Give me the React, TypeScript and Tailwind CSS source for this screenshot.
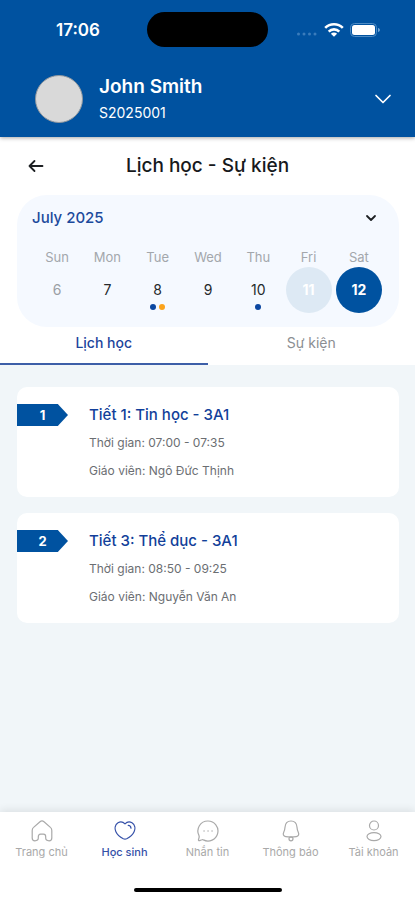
import { useState } from "react";
import type { ReactNode } from "react";
import clsx from "clsx";

const days = [
  { name: "Sun", date: 6, look: "text-[#9a9fa5]", dots: [] },
  { name: "Mon", date: 7, look: "text-[#26292c]", dots: [] },
  { name: "Tue", date: 8, look: "text-[#26292c]", dots: ["bg-[#0b47a1]", "bg-[#fba31c]"] },
  { name: "Wed", date: 9, look: "text-[#26292c]", dots: [] },
  { name: "Thu", date: 10, look: "text-[#26292c]", dots: ["bg-[#0b47a1]"] },
  { name: "Fri", date: 11, look: "bg-[#dde9f4] text-white font-bold", dots: [] },
  { name: "Sat", date: 12, look: "bg-[#0052a0] text-white font-bold", dots: [] },
];

const lessons = [
  { id: 1, title: "Tiết 1: Tin học - 3A1", time: "07:00 - 07:35", teacher: "Ngô Đức Thịnh" },
  { id: 2, title: "Tiết 3: Thể dục - 3A1", time: "08:50 - 09:25", teacher: "Nguyễn Văn An" },
];

const tabs = ["Lịch học", "Sự kiện"];

const navItems: { label: string; icon: ReactNode }[] = [
  {
    label: "Trang chủ",
    icon: (
      <path d="M1.200 10.400c0-1.300.4-2.200 1.400-3L9 1.800c1.300-1.100 2.700-1.100 4 0l6.400 5.600c1 .8 1.400 1.700 1.400 3v7.600c0 1.800-.9 2.800-2.700 2.800s-3.400-.9-3.400-2.700v-1.400c0-1.700-.8-2.500-2.200-2.500h-3c-1.400 0-2.200.8-2.200 2.500v1.400c0 1.800-1.600 2.700-3.400 2.700S1.200 19.800 1.200 18z" />
    ),
  },
  {
    label: "Học sinh",
    icon: (
      <>
        <path d="M11 3.800C9.300 2 6.300 1.300 4 2.700 1.100 4.500.4 8.300 1.900 11.700c1.500 3.300 4.600 5.600 7.400 7.100 1.200.6 2.200.6 3.400 0 2.800-1.500 5.900-3.800 7.400-7.100 1.500-3.400.8-7.200-2.100-9C15.700 1.300 12.700 2 11 3.800z" />
        <path d="M14.200 5.400c1.700.1 2.700 1.100 2.800 2.800" />
      </>
    ),
  },
  {
    label: "Nhắn tin",
    icon: (
      <>
        <path d="M11 1a10 10 0 1 1-4.600 18.900c-.5-.3-1-.3-1.500-.1l-2.300.8c-.8.3-1.300-.2-1.100-1l.7-2.600c.1-.5 0-.9-.2-1.400A10 10 0 0 1 11 1z" />
        <path d="M7 11h.1M11 11h.1M15 11h.1" strokeWidth="1.300" />
      </>
    ),
  },
  {
    label: "Thông báo",
    icon: (
      <>
        <path d="M11 1C7.300 1 5.200 3.700 5 7.300c-.1 2-.4 3-1.200 4.600-1.200 2.500-.4 4.300 1.900 4.700 3.500.6 7.100.6 10.600 0 2.300-.4 3.100-2.200 1.900-4.700-.8-1.600-1.100-2.600-1.200-4.600C16.800 3.700 14.700 1 11 1z" />
        <circle cx="11" cy="18.800" r="2" />
      </>
    ),
  },
  {
    label: "Tài khoản",
    icon: (
      <>
        <circle cx="11" cy="5.500" r="4.500" />
        <ellipse cx="11" cy="16.600" rx="7" ry="4" />
      </>
    ),
  },
];

function StatusBar() {
  return (
    <div className="grid grid-cols-3 items-center px-[17px] pt-3">
      <span className="pl-[39px] text-[17px] leading-6 font-semibold">17:06</span>
      <div className="h-[35px] w-[121px] justify-self-center rounded-full bg-black" />
      <div className="flex items-center justify-end pr-[17px]">
        <svg width="22" height="18" viewBox="0 0 22 18" className="mr-[6px] fill-[#3a7cbb]">
          <circle cx="2.500" cy="13" r="1.500" />
          <circle cx="8" cy="13" r="1.500" />
          <circle cx="13.500" cy="13" r="1.500" />
          <circle cx="19" cy="13" r="1.500" />
        </svg>
        <svg width="20" height="16" viewBox="0 0 20 16" fill="none" stroke="white" strokeWidth="2.600" className="mr-[6px]">
          <path d="M1.200 5.900a12.500 12.500 0 0 1 17.600 0" />
          <path d="M4.700 9.600a7.500 7.500 0 0 1 10.600 0" />
          <path d="M10 14.800l-3.100-3.100a4.400 4.400 0 0 1 6.200 0z" fill="white" stroke="none" />
        </svg>
        <svg width="31" height="14" viewBox="0 0 31 14">
          <rect x=".500" y=".500" width="26" height="13" rx="4" fill="none" stroke="#4d8bc4" />
          <rect x="2" y="2" width="23" height="10" rx="2.500" fill="white" />
          <path d="M28 5v4c1.200-.4 1.900-1.100 1.900-2S29.200 5.400 28 5z" fill="#6fa3d3" />
        </svg>
      </div>
    </div>
  );
}

function Header() {
  return (
    <header className="relative bg-[#0052a0] text-white shadow-[0_1px_4px_rgba(0,0,0,0.35)]">
      <StatusBar />
      <div className="flex items-center gap-4 pt-[26px] pr-[22px] pb-3 pl-[35px]">
        <div className="size-12 rounded-full border border-[#8f979f] bg-[#d9d9d9]" />
        <div className="flex-1">
          <p className="text-[19px] leading-7 font-semibold">John Smith</p>
          <p className="text-[14px] leading-6">S2025001</p>
        </div>
        <button type="button" aria-label="Đổi học sinh">
          <svg width="20" height="20" viewBox="0 0 20 20" fill="none" stroke="white" strokeWidth="1.700" strokeLinecap="round" strokeLinejoin="round">
            <path d="M3 6.500l7 7 7-7" />
          </svg>
        </button>
      </div>
    </header>
  );
}

function Calendar() {
  return (
    <section className="mr-4 ml-[17px] rounded-[30px] bg-[#f5f9ff] px-[15px] pb-[14px]">
      <div className="flex h-[46px] items-center justify-between pr-[6px]">
        <h2 className="text-[15px] leading-6 font-medium text-[#1c4a9c]">July 2025</h2>
        <button type="button" aria-label="Mở lịch tháng">
          <svg width="14" height="14" viewBox="0 0 14 14" fill="none" stroke="#1d2023" strokeWidth="1.800" strokeLinecap="round" strokeLinejoin="round">
            <path d="M3 5l4 4 4-4" />
          </svg>
        </button>
      </div>
      <div className="grid grid-cols-7 pt-2">
        {days.map((day) => (
          <div key={day.name} className="flex flex-col items-center">
            <span className="pb-[2px] text-[13px] leading-4 text-[#a3a7ac]">{day.name}</span>
            <button
              type="button"
              className={clsx("relative size-[46px] rounded-full text-[14px] leading-5", day.look)}
            >
              {day.date}
              <span className="absolute inset-x-0 bottom-[3px] flex justify-center gap-[3px]">
                {day.dots.map((dot) => (
                  <span key={dot} className={clsx("size-[6px] rounded-full", dot)} />
                ))}
              </span>
            </button>
          </div>
        ))}
      </div>
    </section>
  );
}

function LessonCard({ lesson }: { lesson: (typeof lessons)[number] }) {
  return (
    <li className="flex items-start rounded-[10px] bg-white pt-4 pb-[14px]">
      <span className="flex h-6 w-[51px] items-center justify-center bg-[#0052a0] text-[13px] leading-4 font-bold text-white [clip-path:polygon(0_4%,80%_4%,100%_50%,80%_96%,0_96%)]">
        {lesson.id}
      </span>
      <div className="pl-[21px]">
        <h3 className="text-[15px] leading-6 font-medium text-[#123f9a]">{lesson.title}</h3>
        <p className="pt-1 text-[12px] leading-6 text-[#6b6e72]">Thời gian: {lesson.time}</p>
        <p className="pt-1 text-[12px] leading-6 text-[#6b6e72]">Giáo viên: {lesson.teacher}</p>
      </div>
    </li>
  );
}

function BottomNav() {
  return (
    <nav className="bg-white pb-2 shadow-[0_-2px_8px_rgba(0,0,0,0.09)]">
      <div className="grid grid-cols-5 pt-2">
        {navItems.map((item, i) => (
          <a
            key={item.label}
            href="#"
            className={clsx(
              "flex flex-col items-center",
              i === 1 ? "font-medium text-[#3450a8]" : "text-[#a9a9a9]"
            )}
          >
            <svg width="22" height="22" viewBox="0 0 22 22" fill="none" stroke="currentColor" strokeWidth="1.200" strokeLinecap="round" strokeLinejoin="round">
              {item.icon}
            </svg>
            <span className="text-[11px] leading-5 whitespace-nowrap">{item.label}</span>
          </a>
        ))}
      </div>
      <div className="mx-auto mt-[26px] h-1 w-[148px] rounded-full bg-black" />
    </nav>
  );
}

export default function App() {
  const [tab, setTab] = useState(0);

  return (
    <div className="flex min-h-screen flex-col bg-[#f1f6f9] font-['Inter','Noto_Sans',sans-serif]">
      <Header />

      <div className="bg-white">
        <div className="grid h-[58px] grid-cols-[40px_1fr_40px] items-center px-4">
          <button type="button" aria-label="Quay lại" className="justify-self-center">
            <svg width="18" height="18" viewBox="0 0 18 18" fill="none" stroke="#1d2023" strokeWidth="1.800" strokeLinecap="round" strokeLinejoin="round">
              <path d="M15.500 9h-13M7.500 4l-5 5 5 5" />
            </svg>
          </button>
          <h1 className="text-center text-[19px] leading-7 font-medium text-[#17191c]">Lịch học - Sự kiện</h1>
        </div>

        <Calendar />

        <div role="tablist" className="grid grid-cols-2">
          {tabs.map((label, i) => (
            <button
              key={label}
              type="button"
              role="tab"
              aria-selected={tab === i}
              onClick={() => setTab(i)}
              className={clsx(
                "h-[38px] border-b-2 pb-1 text-[14px] leading-6",
                tab === i ? "border-[#3d5fa8] font-medium text-[#1c449c]" : "border-transparent text-[#8b8e92]"
              )}
            >
              {label}
            </button>
          ))}
        </div>
      </div>

      <main className="flex-1 py-[22px] pr-4 pl-[17px]">
        <ul className="flex flex-col gap-4">
          {lessons.map((lesson) => (
            <LessonCard key={lesson.id} lesson={lesson} />
          ))}
        </ul>
      </main>

      <BottomNav />
    </div>
  );
}
